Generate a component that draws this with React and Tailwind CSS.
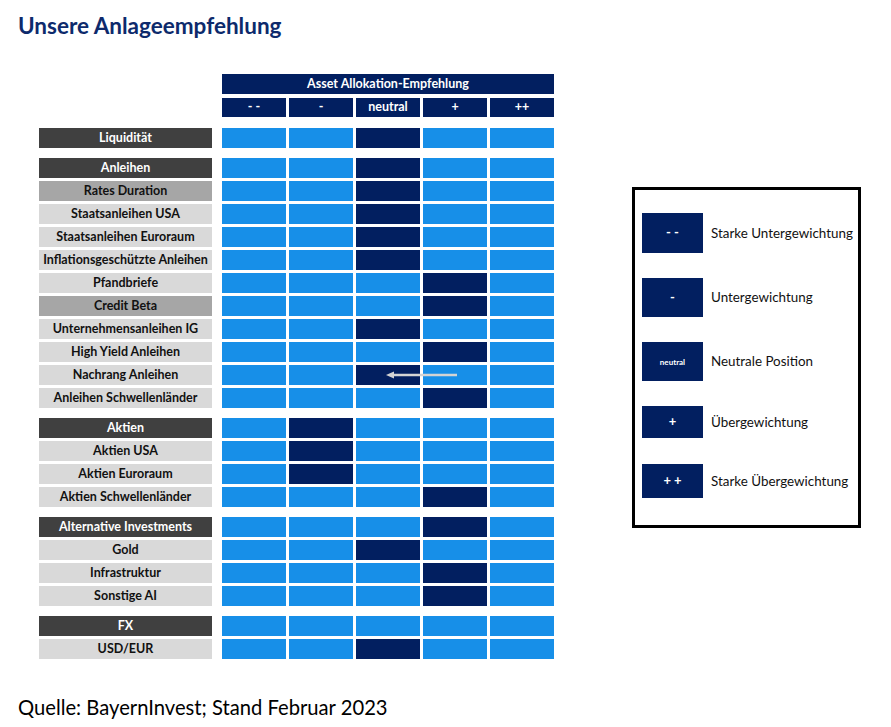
import React from 'react';

const NAVY = 'bg-[#021f60]';
const LIGHT = 'bg-[#178fe8]';

// kind: g = Gruppe (dunkel), s = Untergruppe (mittelgrau), i = Position (hellgrau)
const groups = [
  [{ name: 'Liquidität', kind: 'g', pick: 2 }],
  [
    { name: 'Anleihen', kind: 'g', pick: 2 },
    { name: 'Rates Duration', kind: 's', pick: 2 },
    { name: 'Staatsanleihen USA', kind: 'i', pick: 2 },
    { name: 'Staatsanleihen Euroraum', kind: 'i', pick: 2 },
    { name: 'Inflationsgeschützte Anleihen', kind: 'i', pick: 2 },
    { name: 'Pfandbriefe', kind: 'i', pick: 3 },
    { name: 'Credit Beta', kind: 's', pick: 3 },
    { name: 'Unternehmensanleihen IG', kind: 'i', pick: 2 },
    { name: 'High Yield Anleihen', kind: 'i', pick: 3 },
    { name: 'Nachrang Anleihen', kind: 'i', pick: 2, arrow: true },
    { name: 'Anleihen Schwellenländer', kind: 'i', pick: 3 },
  ],
  [
    { name: 'Aktien', kind: 'g', pick: 1 },
    { name: 'Aktien USA', kind: 'i', pick: 1 },
    { name: 'Aktien Euroraum', kind: 'i', pick: 1 },
    { name: 'Aktien Schwellenländer', kind: 'i', pick: 3 },
  ],
  [
    { name: 'Alternative Investments', kind: 'g', pick: 3 },
    { name: 'Gold', kind: 'i', pick: 2 },
    { name: 'Infrastruktur', kind: 'i', pick: 3 },
    { name: 'Sonstige AI', kind: 'i', pick: 3 },
  ],
  [
    { name: 'FX', kind: 'g', pick: -1 },
    { name: 'USD/EUR', kind: 'i', pick: 2 },
  ],
];

const labelStyles = {
  g: 'bg-[#404040] text-white',
  s: 'bg-[#a6a6a6] text-[#111]',
  i: 'bg-[#d9d9d9] text-[#111]',
};

const legend = [
  { sign: '- -', text: 'Starke Untergewichtung', h: 'h-[40px]', mt: 'mt-0' },
  { sign: '-', text: 'Untergewichtung', h: 'h-[39px]', mt: 'mt-[25px]' },
  { sign: 'neutral', text: 'Neutrale Position', h: 'h-[39px]', mt: 'mt-[25px]', small: true },
  { sign: '+', text: 'Übergewichtung', h: 'h-[32px]', mt: 'mt-[25px]' },
  { sign: '+ +', text: 'Starke Übergewichtung', h: 'h-[34px]', mt: 'mt-[26px]' },
];

function Row({ row }) {
  return (
    <div className="flex h-[20px]">
      <div
        className={`w-[173px] flex items-center justify-center text-[12.5px] font-bold whitespace-nowrap ${labelStyles[row.kind]}`}
      >
        {row.name}
      </div>
      <div className="ml-[10px] flex gap-[3px] relative">
        {[0, 1, 2, 3, 4].map((i) => (
          <div key={i} className={`w-[64px] h-[20px] ${i === row.pick ? NAVY : LIGHT}`} />
        ))}
        {row.arrow && (
          <svg className="absolute left-[162px] top-[4px]" width="74" height="12" viewBox="0 0 74 12">
            <line x1="8" y1="6" x2="73" y2="6" stroke="#d4d4d4" strokeWidth="2.5" />
            <path d="M2 6 L10 2.5 L10 9.5 Z" fill="#d4d4d4" />
          </svg>
        )}
      </div>
    </div>
  );
}

export default function App() {
  return (
    <div className="w-[891px] h-[727px] bg-white relative overflow-hidden font-['Lato','Liberation_Sans',sans-serif]">
      <h1 className="pl-[18px] pt-[14px] text-[22.5px] leading-[24px] font-bold text-[#0d2a6c]">
        Unsere Anlageempfehlung
      </h1>

      <div className="flex items-start mt-[36px]">
        {/* Tabelle */}
        <div className="ml-[39px] flex flex-col">
          <div className="ml-[183px] w-[332px] h-[20px] bg-[#021f60] text-white text-[12.5px] font-bold flex items-center justify-center">
            Asset Allokation-Empfehlung
          </div>
          <div className="ml-[183px] mt-[4px] flex gap-[3px]">
            {['- -', '-', 'neutral', '+', '++'].map((h) => (
              <div
                key={h}
                className="w-[64px] h-[19px] bg-[#021f60] text-white text-[12.5px] font-bold flex items-center justify-center"
              >
                {h}
              </div>
            ))}
          </div>

          <div className="mt-[1px]">
            {groups.map((g, gi) => (
              <div key={gi} className="mt-[10px] flex flex-col gap-[3px]">
                {g.map((row) => (
                  <Row key={row.name} row={row} />
                ))}
              </div>
            ))}
          </div>
        </div>

        {/* Legende */}
        <div className="ml-[78px] mt-[113px] w-[229px] border-[3px] border-black pt-[23px] pb-[27px] pl-[7px] flex flex-col">
          {legend.map((l) => (
            <div key={l.text} className={`flex items-center ${l.mt}`}>
              <div
                className={`w-[61px] ${l.h} bg-[#021f60] text-white font-bold flex items-center justify-center ${
                  l.small ? 'text-[8px]' : 'text-[13px]'
                }`}
              >
                {l.sign}
              </div>
              <div className="ml-[8px] text-[13.4px] text-[#111] whitespace-nowrap">{l.text}</div>
            </div>
          ))}
        </div>
      </div>

      <div className="absolute left-[18px] top-[695px] text-[20.2px] leading-[24px] text-black">
        Quelle: BayernInvest; Stand Februar 2023
      </div>
    </div>
  );
}
